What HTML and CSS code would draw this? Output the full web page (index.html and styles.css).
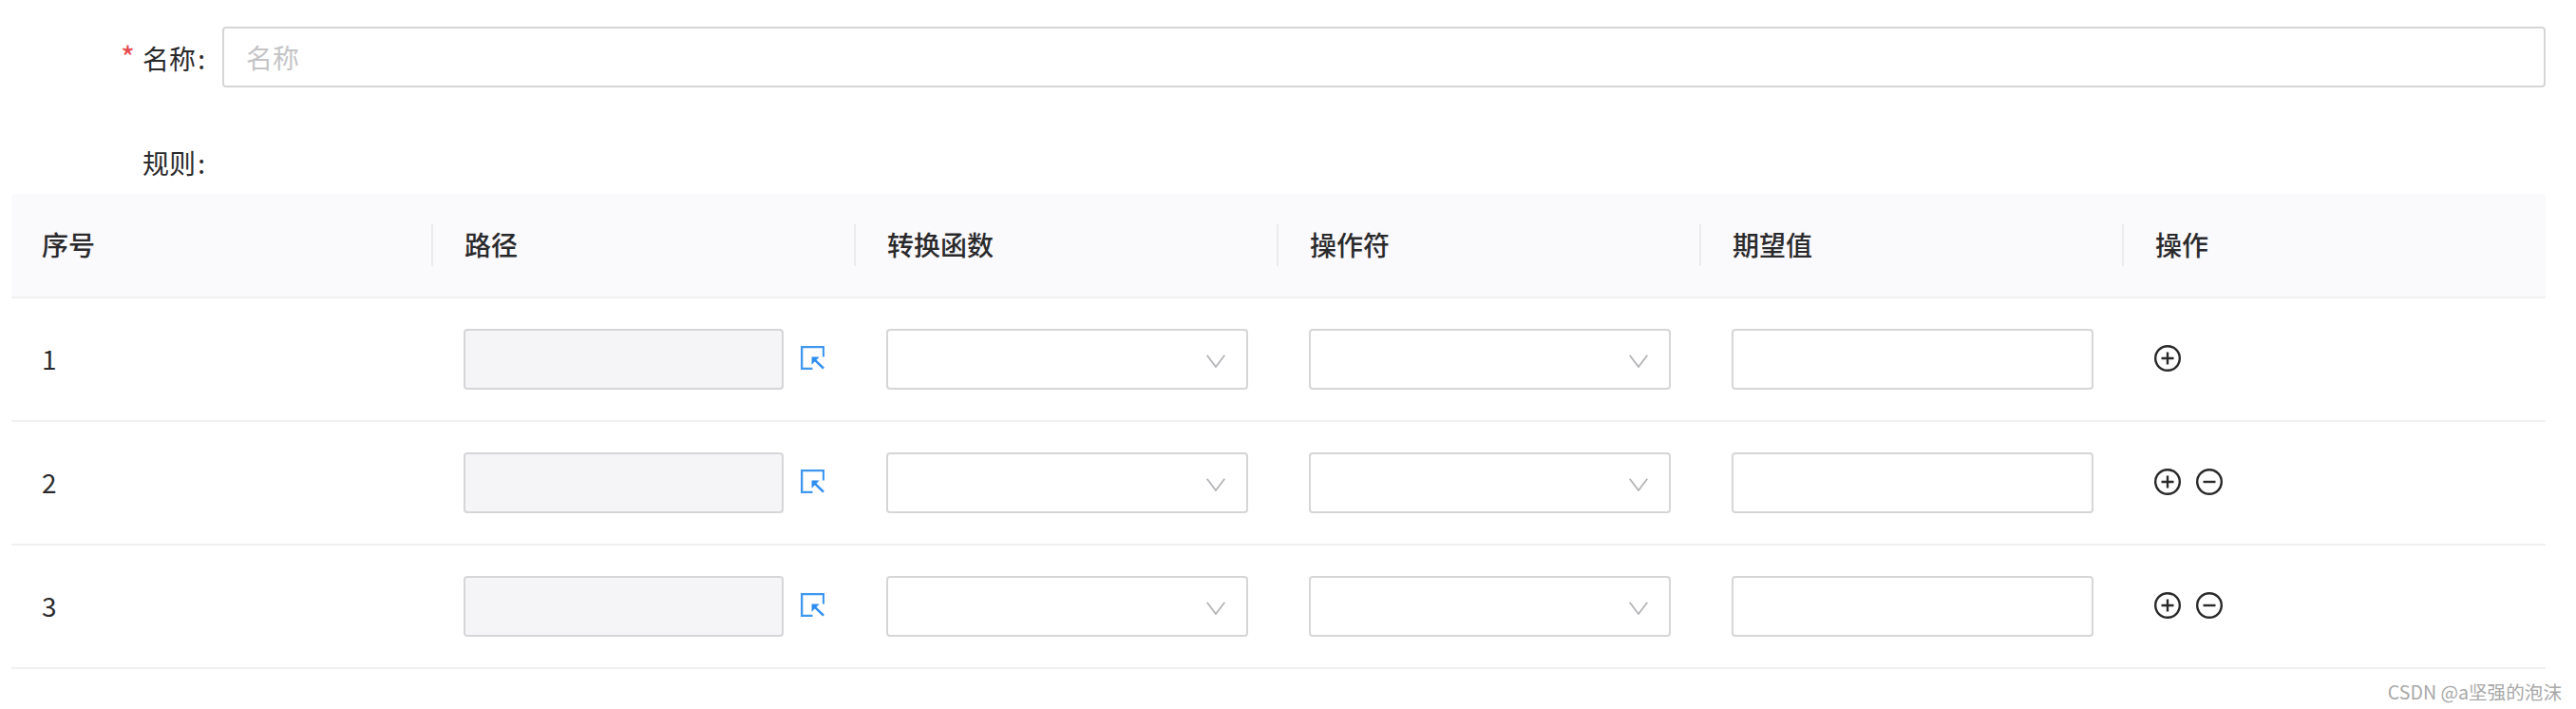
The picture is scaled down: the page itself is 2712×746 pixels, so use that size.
FILE: index.html
```html
<!DOCTYPE html>
<html lang="en">
<head>
    <meta charset="UTF-8">
    <meta name="viewport" content="width=device-width, initial-scale=1.0">
    <title>规则</title>
    <link rel="stylesheet" href="styles.css">
</head>
<body>

    <svg class="sprites" width="0" height="0">
        <symbol id="pick" viewBox="0 0 26 26">
            <path d="M25 12V1.200H1.200V24.800H13" fill="none" stroke="#3f97f0" stroke-width="2.400"/>
            <path d="M25 24.500 15 15" fill="none" stroke="#2e8df0" stroke-width="2.600"/>
            <path d="M12 12h8.500L12 20.500z" fill="#2e8df0"/>
        </symbol>
        <symbol id="plus" viewBox="0 0 28 28">
            <circle cx="14" cy="14" r="12.800" fill="none" stroke="#2a2a2c" stroke-width="2.400"/>
            <path d="M14 7.500v13M7.500 14h13" fill="none" stroke="#2a2a2c" stroke-width="2.400"/>
        </symbol>
        <symbol id="minus" viewBox="0 0 28 28">
            <circle cx="14" cy="14" r="12.800" fill="none" stroke="#2a2a2c" stroke-width="2.400"/>
            <path d="M7.500 14h13" fill="none" stroke="#2a2a2c" stroke-width="2.400"/>
        </symbol>
        <symbol id="chevron" viewBox="0 0 20 14">
            <path d="M.7.700 10 13 19.300.700" fill="none" stroke="#b4b4b8" stroke-width="1.800"/>
        </symbol>
    </svg>

    <form class="form">
        <div class="form-item">
            <label class="form-label"><span class="required">*</span>名称 :</label>
            <input class="input name-input" type="text" placeholder="名称">
        </div>

        <div class="form-item rules-label">
            <label class="form-label">规则 :</label>
        </div>

        <div class="table">
            <div class="table-row table-head">
                <div class="cell">序号</div>
                <div class="cell">路径</div>
                <div class="cell">转换函数</div>
                <div class="cell">操作符</div>
                <div class="cell">期望值</div>
                <div class="cell">操作</div>
            </div>

            <div class="table-row">
                <div class="cell index-cell">1</div>
                <div class="cell path-cell">
                    <input class="input path-input" type="text" disabled>
                    <svg class="icon-pick"><use href="#pick"/></svg>
                </div>
                <div class="cell"><div class="select"><svg class="chevron"><use href="#chevron"/></svg></div></div>
                <div class="cell"><div class="select"><svg class="chevron"><use href="#chevron"/></svg></div></div>
                <div class="cell"><input class="input value-input" type="text"></div>
                <div class="cell actions">
                    <svg class="icon-action"><use href="#plus"/></svg>
                </div>
            </div>

            <div class="table-row">
                <div class="cell index-cell">2</div>
                <div class="cell path-cell">
                    <input class="input path-input" type="text" disabled>
                    <svg class="icon-pick"><use href="#pick"/></svg>
                </div>
                <div class="cell"><div class="select"><svg class="chevron"><use href="#chevron"/></svg></div></div>
                <div class="cell"><div class="select"><svg class="chevron"><use href="#chevron"/></svg></div></div>
                <div class="cell"><input class="input value-input" type="text"></div>
                <div class="cell actions">
                    <svg class="icon-action"><use href="#plus"/></svg>
                    <svg class="icon-action"><use href="#minus"/></svg>
                </div>
            </div>

            <div class="table-row">
                <div class="cell index-cell">3</div>
                <div class="cell path-cell">
                    <input class="input path-input" type="text" disabled>
                    <svg class="icon-pick"><use href="#pick"/></svg>
                </div>
                <div class="cell"><div class="select"><svg class="chevron"><use href="#chevron"/></svg></div></div>
                <div class="cell"><div class="select"><svg class="chevron"><use href="#chevron"/></svg></div></div>
                <div class="cell"><input class="input value-input" type="text"></div>
                <div class="cell actions">
                    <svg class="icon-action"><use href="#plus"/></svg>
                    <svg class="icon-action"><use href="#minus"/></svg>
                </div>
            </div>
        </div>
    </form>

    <div class="watermark">CSDN @a坚强的泡沫</div>

</body>
</html>
```

FILE: styles.css
```css
* {
    box-sizing: border-box;
}

html,
body {
    height: 100%;
}

body {
    margin: 0;
    position: relative;
    overflow: hidden;
    background-color: #fff;
    color: #2a2a2c;
    font-family: "Noto Sans CJK SC", "Liberation Sans", sans-serif;
    font-size: 28px;
}

.sprites {
    display: block;
    height: 0;
}

.form {
    padding: 28px 32px 0 12px;
}

.form-item {
    display: flex;
    align-items: center;
    gap: 18px;
}

.form-label {
    width: 204px;
    padding-bottom: 2px;
    text-align: right;
    white-space: nowrap;
    line-height: 1;
    word-spacing: -4px;
}

.required {
    color: #e5484d;
    margin-right: 8px;
    font-size: 32px;
    line-height: 1;
}

.input {
    height: 64px;
    border: 2px solid #d6d6d8;
    border-radius: 4px;
    background-color: #fff;
    font-family: inherit;
    font-size: 28px;
    outline: none;
}

.name-input {
    flex: 1;
    padding: 0 23px;
}

.name-input::placeholder {
    color: #c4c4c6;
}

.rules-label {
    height: 64px;
    margin-top: 48px;
}

.table-row {
    display: grid;
    grid-template-columns: repeat(5, 445px) 1fr;
    height: 130px;
    border-bottom: 2px solid #f0f0f2;
}

.table-head {
    height: 110px;
    background-color: #faf9fb;
    border-radius: 4px 4px 0 0;
    font-weight: 500;
}

.cell {
    display: flex;
    align-items: center;
    position: relative;
    padding: 0 32px 0 31px;
}

.table-head .cell {
    padding-left: 32px;
    padding-bottom: 2px;
}

.index-cell {
    padding-left: 32px;
    padding-bottom: 3px;
}

.table-head .cell:not(:first-child)::before {
    content: "";
    position: absolute;
    left: -3px;
    top: 32px;
    width: 2px;
    height: 44px;
    background-color: #ebebed;
}

.path-input {
    width: 337px;
    flex: none;
    background-color: #f5f4f7;
}

.icon-pick {
    width: 25px;
    height: 25px;
    margin: -4px 0 0 18px;
    flex: none;
}

.select {
    display: flex;
    align-items: center;
    justify-content: flex-end;
    width: 381px;
    height: 64px;
    padding: 4px 22px 0 0;
    border: 2px solid #d6d6d8;
    border-radius: 4px;
}

.chevron {
    width: 20px;
    height: 14px;
}

.value-input {
    width: 381px;
}

.actions {
    gap: 16px;
}

.icon-action {
    width: 28px;
    height: 28px;
    margin-top: -3px;
}

.watermark {
    position: absolute;
    right: 15px;
    top: 715px;
    color: #a8a8a8;
    font-size: 19.6px;
    line-height: 26px;
    white-space: nowrap;
}
```
